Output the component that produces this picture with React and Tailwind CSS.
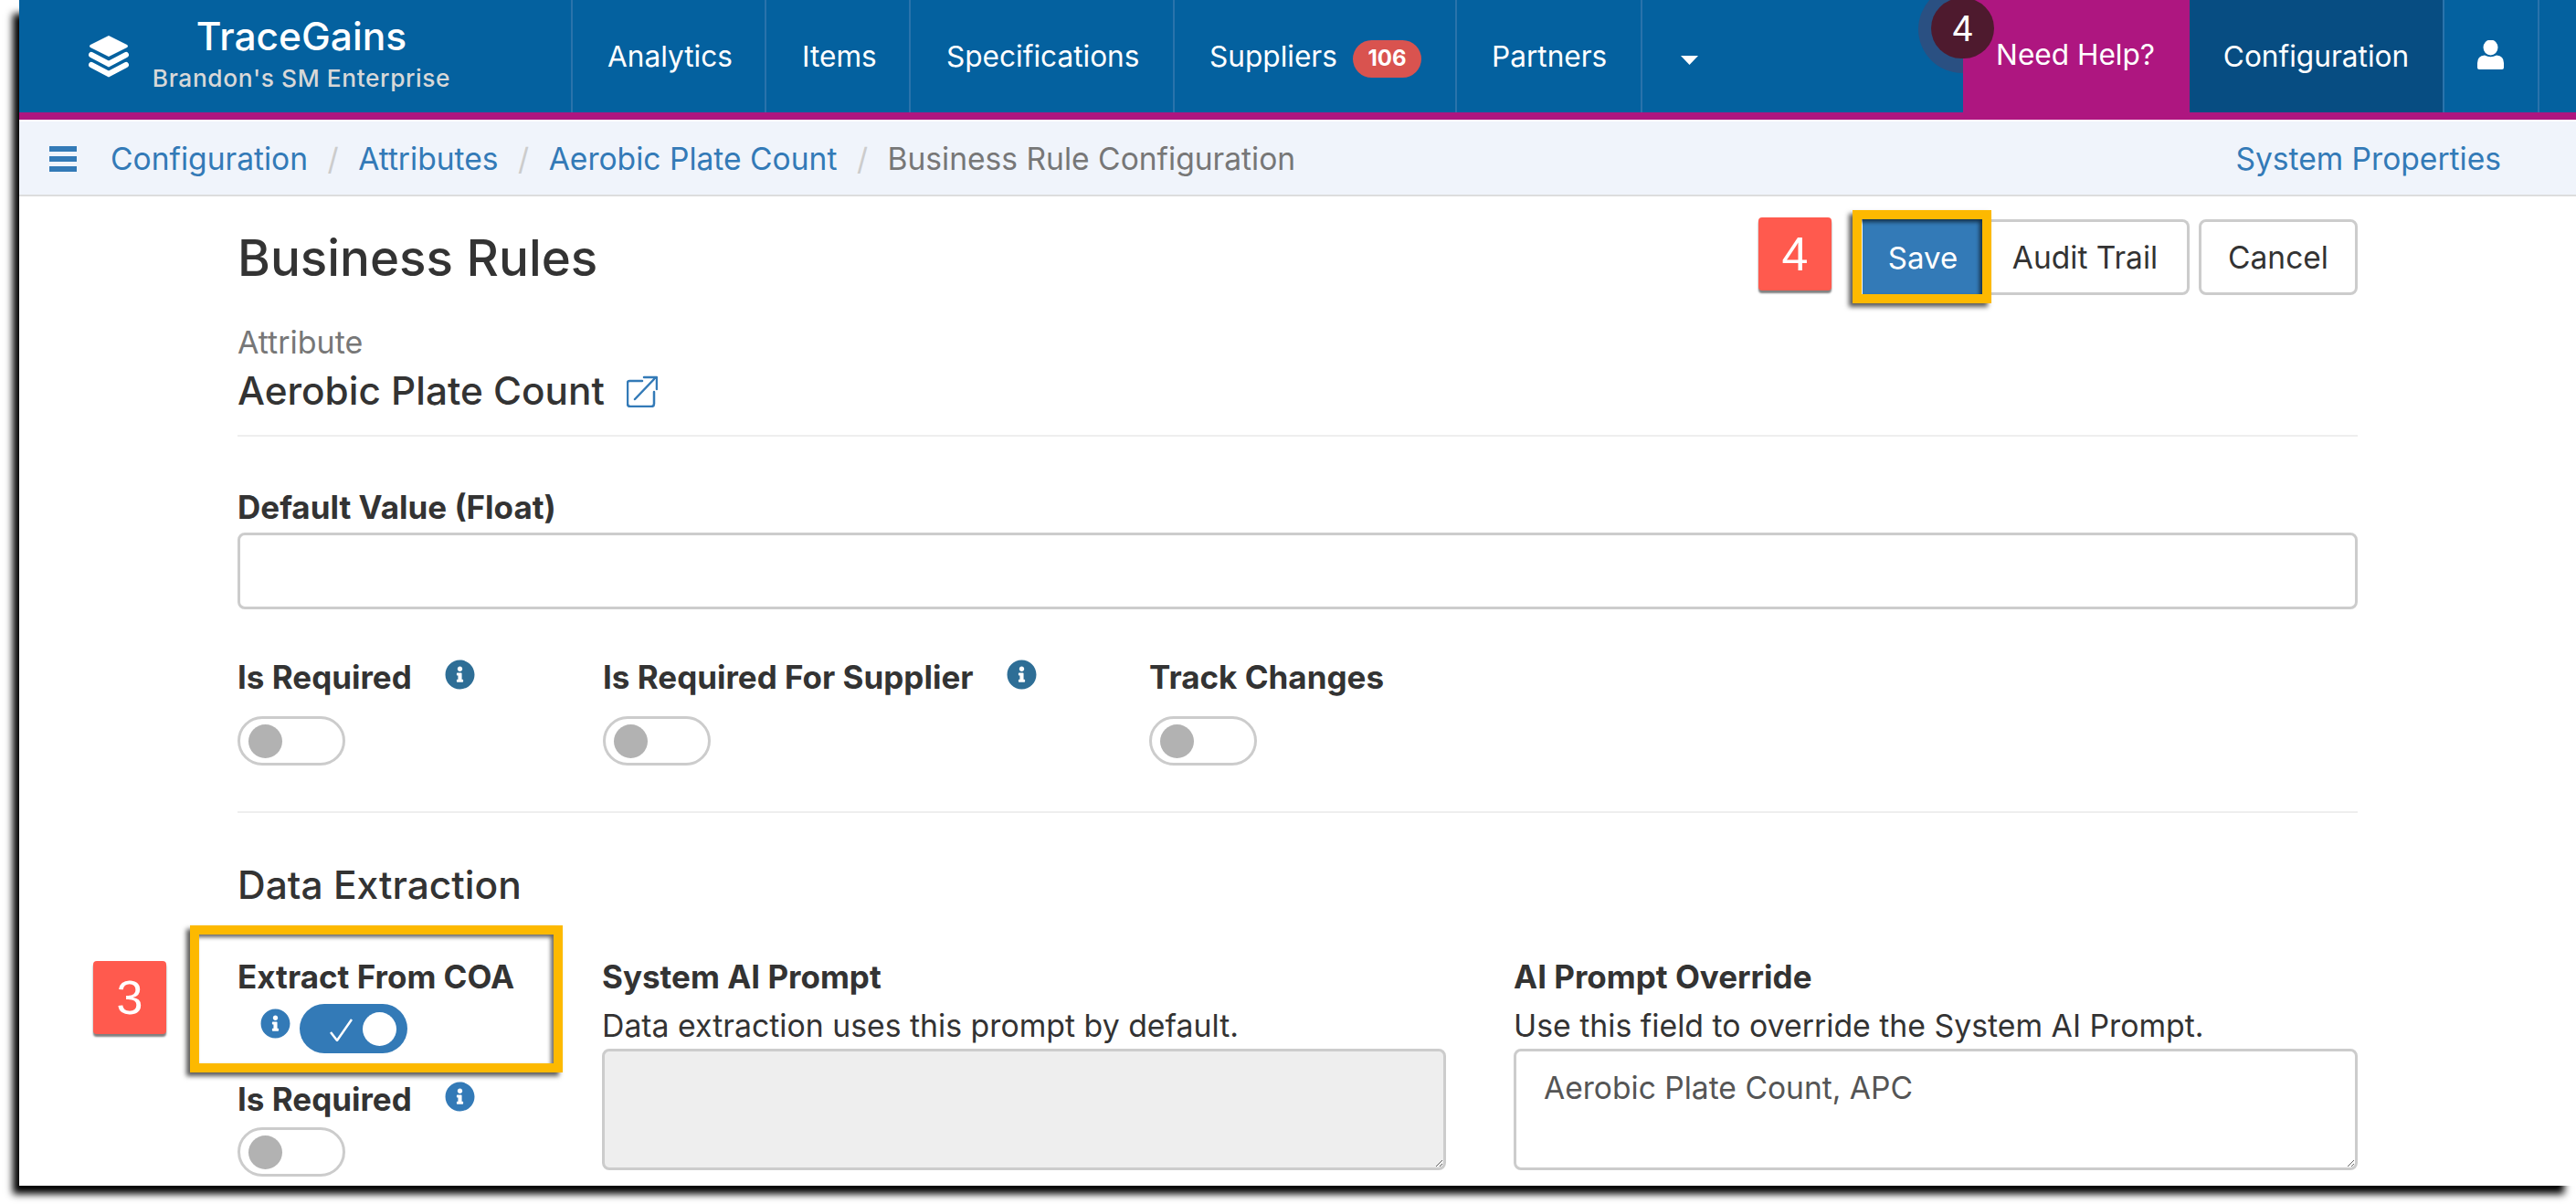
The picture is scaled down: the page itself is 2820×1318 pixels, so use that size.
import React from 'react';
import { FaInfoCircle } from 'react-icons/fa';

function NavItem({ children, className = '' }) {
  return (
    <div className={`flex items-center border-r-2 border-[#2a73ab] text-[31.6px] text-white ${className}`}>
      {children}
    </div>
  );
}

function Toggle({ on = false }) {
  if (on) {
    return (
      <div className="flex h-[54px] w-[118px] items-center justify-end rounded-full bg-[#337ab7] pr-[12px]">
        <svg width="25" height="25" viewBox="0 0 25 25" className="mr-[11px] mt-[2px]" fill="none" stroke="white" strokeWidth="2.5">
          <path d="M1 15l7 9L24 1" />
        </svg>
        <div className="h-[37px] w-[37px] rounded-full bg-white" />
      </div>
    );
  }
  return (
    <div className="flex h-[54px] w-[118px] items-center rounded-full border-[3px] border-[#ccc] bg-white pl-[9px]">
      <div className="h-[37px] w-[37px] rounded-full bg-[#b2b2b2]" />
    </div>
  );
}

function Info({ className = '' }) {
  return <FaInfoCircle className={`h-[33px] w-[33px] shrink-0 ${className}`} />;
}

function Label({ children, className = '' }) {
  return <div className={`text-[35px] leading-[40px] font-bold text-[#333] ${className}`}>{children}</div>;
}

function Marker({ children, className = '' }) {
  return (
    <div className={`absolute flex h-[80px] w-[80px] items-center justify-center rounded-[4px] bg-[#ff5a4e] font-['Liberation_Sans',sans-serif] text-[52px] text-white shadow-[0_3px_2px_rgba(0,0,0,0.5)] ${className}`}>
      {children}
    </div>
  );
}

const highlight = 'absolute border-[10px] border-[#fdb900] shadow-[-4px_4px_5px_rgba(0,0,0,0.65),inset_-3px_3px_4px_rgba(0,0,0,0.6)]';

export default function App() {
  return (
    <div className="h-[1318px] w-[2820px] overflow-hidden bg-white pl-[21px] font-['Inter',sans-serif]">
      <div className="relative flex h-[1298px] w-[2799px] flex-col bg-white shadow-[-10px_12px_8px_-3px_#000]">
        {/* top nav */}
        <div className="flex h-[131px] shrink-0 border-b-[8px] border-[#ae1680] bg-[#04619f]">
          <div className="flex w-[606px] items-center border-r-2 border-[#2a73ab]">
            <svg width="44" height="46" viewBox="0 0 44 46" className="ml-[76px] mt-[1px] shrink-0">
              <path d="M22 0 L42 10 Q44 11.500 42 13 L22 23 L2 13 Q0 11.500 2 10 Z" fill="white" />
              <path d="M3 21 L22 31 L41 21" fill="none" stroke="white" strokeWidth="6" strokeLinecap="round" />
              <path d="M3 32 L22 42 L41 32" fill="none" stroke="white" strokeWidth="6" strokeLinecap="round" />
            </svg>
            <div className="ml-[26px] flex w-[326px] flex-col items-center">
              <div className="mt-[-5px] text-[42.5px] leading-[48px] font-medium text-white">TraceGains</div>
              <div className="mt-[6px] text-[26.3px] leading-[32px] font-medium tracking-[0.6px] whitespace-nowrap text-[#d8d8d8]">Brandon's SM Enterprise</div>
            </div>
          </div>
          <NavItem className="w-[212px] pl-[38px]">Analytics</NavItem>
          <NavItem className="w-[158px] pl-[39px]">Items</NavItem>
          <NavItem className="w-[289px] pl-[39px]">Specifications</NavItem>
          <NavItem className="w-[309px] pl-[38px]">
            Suppliers
            <span className="ml-[17px] mt-[5px] flex h-[41px] w-[75px] items-center justify-center rounded-full bg-[#d9534f] text-[24px] font-bold">106</span>
          </NavItem>
          <NavItem className="w-[203px] pl-[38px]">Partners</NavItem>
          <div className="w-[351px] shrink-0 pl-[42px] pt-[61px]">
            <svg width="19" height="10" viewBox="0 0 19 10" fill="white"><path d="M0 0h19L9.500 10z" /></svg>
          </div>
          <div className="z-10 flex w-[248px] shrink-0 items-center justify-end bg-[#ae1680] pr-[38px] pb-[3px] text-[31.6px] text-white">Need Help?</div>
          <div className="flex w-[277px] shrink-0 items-center justify-center bg-[#074d82] text-[31.6px] text-white">Configuration</div>
          <div className="flex w-[106px] shrink-0 items-center border-x-2 border-[#2a73ab] pl-[36px] pb-[3px]">
            <svg width="29" height="32" viewBox="0 0 29 32" fill="white">
              <ellipse cx="14.500" cy="8" rx="8" ry="8.500" />
              <path d="M0 30 V25 Q0 17 8 16.500 Q14.500 20 21 16.500 Q29 17 29 25 V30 Q29 32 27 32 H2 Q0 32 0 30Z" />
            </svg>
          </div>
          <div className="flex-1" />
        </div>

        {/* breadcrumb */}
        <div className="mt-[2px] flex h-[82px] shrink-0 items-center border-b-2 border-[#ddd] bg-[#f0f4fb] pt-[2px] pr-[82px] pl-[33px] text-[33.6px] text-[#337ab7]">
          <div className="mr-[37px] flex flex-col gap-[5px]">
            <div className="h-[6px] w-[30px] bg-[#337ab7]" />
            <div className="h-[6px] w-[30px] bg-[#337ab7]" />
            <div className="h-[6px] w-[30px] bg-[#337ab7]" />
          </div>
          <span>Configuration</span>
          <span className="mx-[21.5px] text-[#ccc]">/</span>
          <span>Attributes</span>
          <span className="mx-[21.5px] text-[#ccc]">/</span>
          <span>Aerobic Plate Count</span>
          <span className="mx-[21.5px] text-[#ccc]">/</span>
          <span className="text-[#777]">Business Rule Configuration</span>
          <span className="ml-auto">System Properties</span>
        </div>

        {/* form */}
        <div className="ml-[239px] w-[2321px] text-[#333]">
          <div className="mt-[25px] flex h-[83px] items-center justify-between">
            <h1 className="pt-[2px] text-[54.7px] font-medium text-[#333]">Business Rules</h1>
            <div className="flex h-full">
              <button className="w-[132px] bg-[#337ab7] pt-[2px] text-[33px] text-white">Save</button>
              <button className="w-[226px] rounded-r-[8px] border-[3px] border-l-0 border-[#ccc] bg-white pt-[2px] text-[33.5px] text-[#333]">Audit Trail</button>
              <button className="ml-[10px] w-[174px] rounded-[8px] border-[3px] border-[#ccc] bg-white pt-[2px] text-[33.5px] text-[#333]">Cancel</button>
            </div>
          </div>

          <div className="mt-[32px] text-[34px] leading-[40px] text-[#777]">Attribute</div>
          <div className="mt-[5px] flex items-center text-[42.3px] leading-[56px] font-medium text-[#333]">
            Aerobic Plate Count
            <svg width="34" height="35" viewBox="0 0 34 35" className="ml-[24px]" fill="none" stroke="#337ab7" strokeWidth="2.500" strokeLinecap="round" strokeLinejoin="round">
              <path d="M17 6H3Q1 6 1 8V31Q1 34 4 34H27Q30 34 30 31V18" />
              <path d="M9 26L32 2M19 2H33V15" />
            </svg>
          </div>
          <div className="mt-[20px] h-[2px] bg-[#eee]" />

          <Label className="mt-[57px]">Default Value (Float)</Label>
          <input readOnly className="mt-[8px] block h-[84px] w-full rounded-[8px] border-[3px] border-[#ccc] bg-white" />

          <div className="mt-[54px] grid grid-cols-[400px_598px_auto]">
            <div>
              <div className="flex items-start text-[#2e6e96]">
                <Label>Is Required</Label>
                <Info className="ml-[36px] mt-px" />
              </div>
              <div className="mt-[23px]"><Toggle /></div>
            </div>
            <div>
              <div className="flex items-start text-[#2e6e96]">
                <Label>Is Required For Supplier</Label>
                <Info className="ml-[36px] mt-px" />
              </div>
              <div className="mt-[23px]"><Toggle /></div>
            </div>
            <div>
              <Label>Track Changes</Label>
              <div className="mt-[23px]"><Toggle /></div>
            </div>
          </div>

          <div className="mt-[50px] h-[2px] bg-[#eee]" />
          <h2 className="mt-[51px] text-[42.5px] leading-[56px] font-medium text-[#333]">Data Extraction</h2>

          <div className="mt-[52px] grid grid-cols-[399px_998px_924px]">
            <div>
              <Label>Extract From COA</Label>
              <div className="mt-[10px] flex items-start pl-[25px] text-[#337ab7]">
                <Info className="mt-[5px]" />
                <div className="ml-[10px]"><Toggle on /></div>
              </div>
              <div className="mt-[30px] flex items-start text-[#337ab7]">
                <Label>Is Required</Label>
                <Info className="ml-[36px] mt-[1px]" />
              </div>
              <div className="mt-[11px]"><Toggle /></div>
            </div>
            <div>
              <Label>System AI Prompt</Label>
              <div className="mt-[14px] text-[33.8px] leading-[40px] text-[#333]">Data extraction uses this prompt by default.</div>
              <textarea readOnly className="mt-[5px] block h-[133px] w-[924px] rounded-[8px] border-[3px] border-[#ccc] bg-[#eee]" />
            </div>
            <div>
              <Label>AI Prompt Override</Label>
              <div className="mt-[14px] text-[33.8px] leading-[40px] text-[#333]">Use this field to override the System AI Prompt.</div>
              <textarea readOnly defaultValue="Aerobic Plate Count, APC" className="mt-[5px] block h-[133px] w-[924px] rounded-[8px] border-[3px] border-[#ccc] bg-white px-[30px] pt-[20px] text-[33.6px] leading-[40px] text-[#555]" />
            </div>
          </div>
        </div>

        {/* annotations */}
        <div className="absolute left-[2079px] top-[-16px] h-[96px] w-[96px] rounded-full bg-[#2a5082]" />
        <div className="absolute left-[2093px] top-[-2px] z-20 flex h-[66px] w-[69px] items-center justify-center rounded-full bg-[#4e1a2e] text-[38px] text-white">4</div>
        <Marker className="left-[1904px] top-[238px]">4</Marker>
        <div className={`${highlight} left-[2007px] top-[230px] h-[102px] w-[152px]`} />
        <Marker className="left-[81px] top-[1052px]">3</Marker>
        <div className={`${highlight} left-[187px] top-[1013px] h-[161px] w-[408px]`} />
      </div>
    </div>
  );
}
